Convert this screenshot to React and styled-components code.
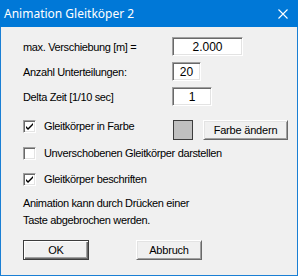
import React from "react";
import styled, { createGlobalStyle } from "styled-components";

const Global = createGlobalStyle`
  html, body { margin: 0; padding: 0; background: #ffffff; }
  body { width: 298px; height: 276px; overflow: hidden; }
`;

const Window = styled.div`
  box-sizing: border-box;
  width: 298px;
  height: 276px;
  border: 1px solid #1a7fd4;
  border-top: none;
  background: #f0f0f0;
  display: flex;
  flex-direction: column;
  font-family: "Liberation Sans", Arial, sans-serif;
  font-size: 11px;
  letter-spacing: -0.35px;
  color: #000;
`;

const TitleBar = styled.div`
  height: 27px;
  margin: 0 -1px;
  background: #0078d7;
  color: #fff;
  display: flex;
  align-items: center;
  justify-content: space-between;
  padding: 0 9px 0 4px;
  font-family: "Noto Sans", "Open Sans", sans-serif;
  font-size: 12px;
  letter-spacing: 0;
  flex-shrink: 0;
`;

const Title = styled.span`
  padding-bottom: 1px;
`;

const Close = styled.svg`
  width: 10px;
  height: 10px;
  margin-right: 1px;
`;

const Body = styled.div`
  padding: 10px 0 0 21px;
  display: flex;
  flex-direction: column;
`;

const Fields = styled.div`
  display: grid;
  grid-template-columns: 150px auto;
  row-gap: 6px;
  align-items: center;
`;

const Label = styled.span`
  padding-left: 1px;
`;

const Input = styled.div`
  box-sizing: border-box;
  width: ${(p) => p.$w}px;
  height: 19px;
  background: #fff;
  border-style: solid;
  border-width: 1px;
  border-color: #a0a0a0 #ffffff #ffffff #a0a0a0;
  box-shadow: inset 1px 1px 0 #696969, inset -1px -1px 0 #e3e3e3;
  display: flex;
  align-items: center;
  justify-content: center;
  font-size: 12px;
  letter-spacing: 0;
`;

const CheckRow = styled.div`
  display: flex;
  align-items: flex-start;
  margin-top: ${(p) => p.$mt}px;
  height: ${(p) => p.$h || 13}px;
`;

const Box = styled.div`
  box-sizing: border-box;
  width: 13px;
  height: 13px;
  flex-shrink: 0;
  background: #fff;
  border-style: solid;
  border-width: 1px;
  border-color: #a0a0a0 #ffffff #ffffff #a0a0a0;
  box-shadow: inset 1px 1px 0 #696969, inset -1px -1px 0 #e3e3e3;
  display: flex;
  align-items: center;
  justify-content: center;
  margin-left: 1px;
`;

const CheckLabel = styled.span`
  margin-left: 8px;
  line-height: 13px;
  flex-shrink: 0;
  width: ${(p) => (p.$w ? p.$w + "px" : "auto")};
`;

const Swatch = styled.div`
  box-sizing: border-box;
  width: 20px;
  height: 20px;
  flex-shrink: 0;
  background: #c0c0c0;
  border: 1px solid #3c3c3c;
`;

const Button = styled.button`
  box-sizing: border-box;
  flex-shrink: 0;
  width: ${(p) => p.$w}px;
  height: ${(p) => p.$h || 20}px;
  padding: 0;
  background: #f0f0f0;
  font-family: "Liberation Sans", Arial, sans-serif;
  font-size: 11px;
  letter-spacing: -0.2px;
  color: #000;
  border-style: solid;
  border-width: 1px;
  border-color: ${(p) =>
    p.$default ? "#3c3c3c" : "#ffffff #696969 #696969 #ffffff"};
  box-shadow: ${(p) =>
    p.$default
      ? "inset 1px 1px 0 #ffffff, inset -1px -1px 0 #696969, inset -2px -2px 0 #a0a0a0"
      : "inset 1px 1px 0 #e3e3e3, inset -1px -1px 0 #a0a0a0"};
  margin-left: ${(p) => p.$ml || 0}px;
`;

const Note = styled.div`
  margin-top: 9px;
  line-height: 17px;
  padding-left: 1px;
`;

const Buttons = styled.div`
  display: flex;
  margin-top: 11px;
  margin-left: 1px;
`;

const Check = () => (
  <svg width="9" height="9" viewBox="0 0 9 9">
    <path d="M1 4 L3 6 L8 1 L8 3 L3 8 L1 6 Z" fill="#000" />
  </svg>
);

export default function App() {
  return (
    <>
      <Global />
      <Window>
        <TitleBar>
          <Title>Animation Gleitköper 2</Title>
          <Close viewBox="0 0 10 10">
            <path d="M0.5 0.5 L9.5 9.5 M9.5 0.5 L0.5 9.5" stroke="#fff" strokeWidth="1.1" />
          </Close>
        </TitleBar>
        <Body>
          <Fields>
            <Label>max. Verschiebung [m] =</Label>
            <Input $w={71}>2.000</Input>
            <Label>Anzahl Unterteilungen:</Label>
            <Input $w={29}>20</Input>
            <Label>Delta Zeit [1/10 sec]</Label>
            <Input $w={40}>1</Input>
          </Fields>
          <CheckRow $mt={14} $h={20}>
            <Box>
              <Check />
            </Box>
            <CheckLabel $w={129}>Gleitkörper in Farbe</CheckLabel>
            <Swatch />
            <Button $w={85} $ml={10}>
              Farbe ändern
            </Button>
          </CheckRow>
          <CheckRow $mt={7}>
            <Box />
            <CheckLabel>Unverschobenen Gleitkörper darstellen</CheckLabel>
          </CheckRow>
          <CheckRow $mt={13}>
            <Box>
              <Check />
            </Box>
            <CheckLabel>Gleitkörper beschriften</CheckLabel>
          </CheckRow>
          <Note>
            Animation kann durch Drücken einer
            <br />
            Taste abgebrochen werden.
          </Note>
          <Buttons>
            <Button $default $w={66}>
              OK
            </Button>
            <Button $w={66} $ml={47}>
              Abbruch
            </Button>
          </Buttons>
        </Body>
      </Window>
    </>
  );
}
